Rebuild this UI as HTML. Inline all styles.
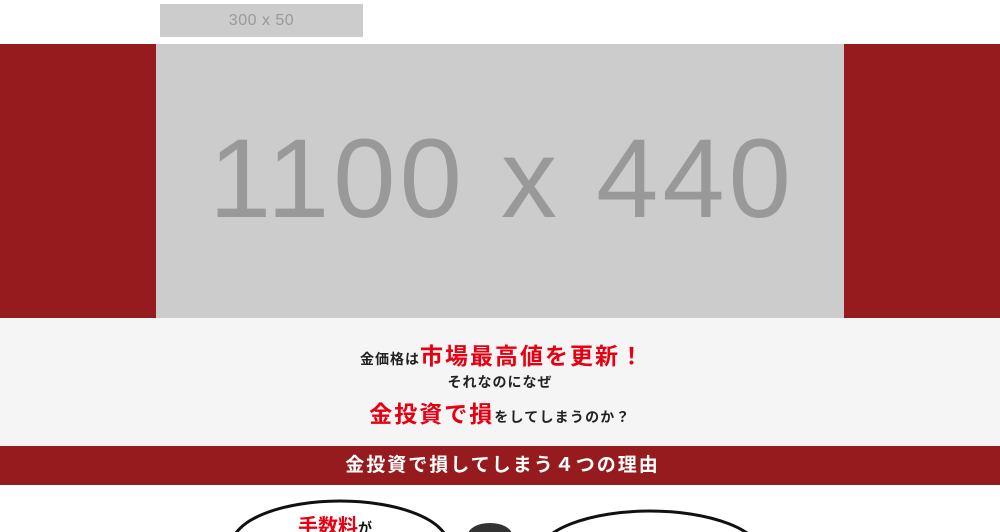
<!DOCTYPE html>
<html><head><meta charset="utf-8"><style>
body{margin:0;width:1000px;height:532px;overflow:hidden;background:#fff;font-family:"Liberation Sans","Noto Sans CJK JP",sans-serif;position:relative}
.a{position:absolute}
</style></head><body>
<div class="a" style="left:160px;top:4px;width:203px;height:33px;background:#ccc;color:#999;font-size:16px;line-height:33px;text-align:center;letter-spacing:0.5px">300 x 50</div>
<div class="a" style="left:0;top:44px;width:1000px;height:274px;background:#961b1e"></div>
<div class="a" style="left:156px;top:44px;width:688px;height:274px;background:#ccc;overflow:hidden"></div>
<div class="a" style="left:156px;top:42px;width:688px;height:274px;color:#999;font-size:112px;line-height:274px;text-align:center;white-space:nowrap;letter-spacing:4px;text-indent:4px">1100 x 440</div>
<div class="a" style="left:0;top:318px;width:1000px;height:128px;background:#f5f5f5"></div>
<div class="a" style="left:0;top:337px;width:1000px;text-align:center;font-weight:bold;color:#222;font-size:14px;letter-spacing:1px;text-indent:5px"><span>金価格は</span><span style="color:#e60012;font-size:23px;letter-spacing:2px">市場最高値を更新！</span></div>
<div class="a" style="left:0;top:372px;width:1000px;text-align:center;font-weight:bold;color:#222;font-size:14px;letter-spacing:1px">それなのになぜ</div>
<div class="a" style="left:0;top:395px;width:1000px;text-align:center;font-weight:bold;color:#222;font-size:14px;letter-spacing:1.2px"><span style="color:#e60012;font-size:23px;letter-spacing:2px">金投資で損</span><span>をしてしまうのか？</span></div>
<div class="a" style="left:0;top:446px;width:1000px;height:39px;background:#961b1e;color:#fff;font-weight:bold;font-size:19px;line-height:39px;text-align:center;letter-spacing:2px;text-indent:5px">金投資で損してしまう４つの理由</div>
<svg class="a" style="left:0;top:485px" width="1000" height="47">
<ellipse cx="340" cy="60" rx="108" ry="44" fill="#fff" stroke="#111" stroke-width="3"/>
<ellipse cx="650" cy="70" rx="112" ry="44" fill="#fff" stroke="#111" stroke-width="3"/>
<ellipse cx="490" cy="50" rx="22" ry="12" fill="#333"/>
<text x="298" y="48" font-size="20" font-weight="bold" fill="#e60012" font-family="Liberation Sans,Noto Sans CJK JP,sans-serif">手数料<tspan font-size="14" fill="#111">が</tspan></text>
</svg>
</body></html>
